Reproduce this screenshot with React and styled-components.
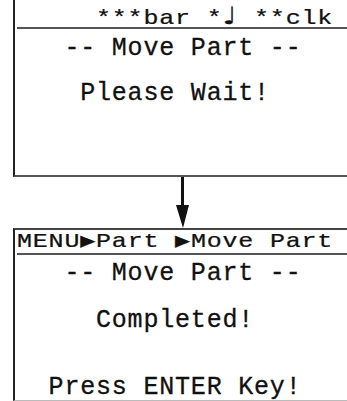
import React from "react";
import styled, { createGlobalStyle } from "styled-components";

const GlobalStyle = createGlobalStyle`
    html, body {
        margin: 0;
        padding: 0;
        background: #fff;
    }
    body {
        font-family: "Liberation Mono", "DejaVu Sans Mono", monospace;
        color: #111;
    }
`

const App = () => {
    return (
        <Page>
            <GlobalStyle />
            <Panel $open>
                <Header $top={7}>
                    <HeaderText>{"     ***bar *"}<Note>♩</Note>{" **clk"}</HeaderText>
                </Header>
                <Line $top={8}>{"   -- Move Part --"}</Line>
                <Line $top={21}>{"    Please Wait!"}</Line>
            </Panel>
            <ArrowBox>
                <svg width="14" height="51" viewBox="0 0 14 51">
                    <rect x="5" y="0" width="3" height="29" fill="#111" />
                    <polygon points="0,28 13,28 7,51" fill="#111" />
                </svg>
            </ArrowBox>
            <Panel>
                <Header $top={3}>
                    <HeaderText>MENU▶Part ▶Move Part</HeaderText>
                </Header>
                <Line $top={7}>{"   -- Move Part --"}</Line>
                <Line $top={23}>{"     Completed!"}</Line>
                <Line $top={43}>{"  Press ENTER Key!"}</Line>
            </Panel>
        </Page>
    )
}

const Page = styled.div`
    width: 347px;
    height: 401px;
    padding-left: 13px;
    box-sizing: border-box;
    display: flex;
    flex-direction: column;
    overflow: hidden;
`
const Panel = styled.div`
    box-sizing: border-box;
    height: ${p => p.$open ? 177 : 173}px;
    border-left: 2px solid #222;
    border-top: ${p => p.$open ? "none" : "2px solid #444"};
    border-bottom: ${p => p.$open ? "2px solid #555" : "1px solid #bbb"};
    padding-left: 2px;
    display: flex;
    flex-direction: column;
`
const Header = styled.div`
    margin-top: ${p => p.$top}px;
    height: 20px;
    border-bottom: 2px solid #555;
    overflow: visible;
`
// LCD title row: same cell width as the body rows, but squatter glyphs
const HeaderText = styled.div`
    font-size: 25px;
    line-height: 25px;
    letter-spacing: 0.8px;
    white-space: pre;
    -webkit-text-stroke: 0.3px #111;
    transform: scaleY(0.8);
    transform-origin: 0 0;
    margin-top: -1px;
`
const Note = styled.span`
    display: inline-block;
    width: 15.8px;
    letter-spacing: 0;
    font-family: "DejaVu Sans", sans-serif;
    font-size: 30px;
    font-weight: 700;
`
const Line = styled.div`
    margin-top: ${p => p.$top}px;
    font-size: 25px;
    line-height: 24px;
    letter-spacing: 0.8px;
    white-space: pre;
    -webkit-text-stroke: 0.3px #111;
`
const ArrowBox = styled.div`
    height: 51px;
    padding-left: 163px;
    display: flex;
`

export default App;
